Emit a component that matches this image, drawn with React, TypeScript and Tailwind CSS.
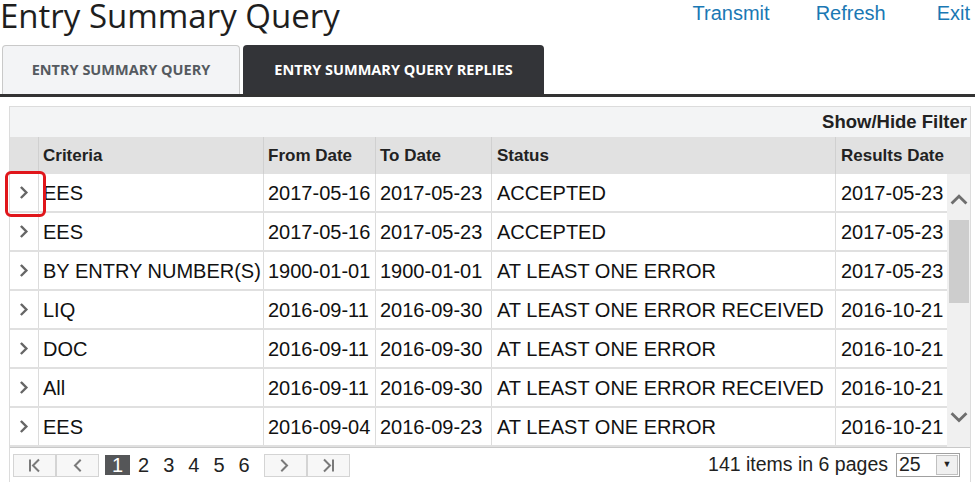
import React from 'react';

type Row = { criteria: string; from: string; to: string; status: string; results: string };

const rows: Row[] = [
  { criteria: 'EES', from: '2017-05-16', to: '2017-05-23', status: 'ACCEPTED', results: '2017-05-23' },
  { criteria: 'EES', from: '2017-05-16', to: '2017-05-23', status: 'ACCEPTED', results: '2017-05-23' },
  { criteria: 'BY ENTRY NUMBER(S)', from: '1900-01-01', to: '1900-01-01', status: 'AT LEAST ONE ERROR', results: '2017-05-23' },
  { criteria: 'LIQ', from: '2016-09-11', to: '2016-09-30', status: 'AT LEAST ONE ERROR RECEIVED', results: '2016-10-21' },
  { criteria: 'DOC', from: '2016-09-11', to: '2016-09-30', status: 'AT LEAST ONE ERROR', results: '2016-10-21' },
  { criteria: 'All', from: '2016-09-11', to: '2016-09-30', status: 'AT LEAST ONE ERROR RECEIVED', results: '2016-10-21' },
  { criteria: 'EES', from: '2016-09-04', to: '2016-09-23', status: 'AT LEAST ONE ERROR', results: '2016-10-21' },
];

const Chevron = ({ dir, className, width = 2.2 }: { dir: 'left' | 'right' | 'up' | 'down'; className?: string; width?: number }) => {
  const d = {
    right: 'M4 2 L9 7 L4 12',
    left: 'M9 2 L4 7 L9 12',
    up: 'M2 9 L7 4 L12 9',
    down: 'M2 4 L7 9 L12 4',
  }[dir];
  return (
    <svg viewBox="0 0 14 14" className={className} fill="none" stroke="currentColor" strokeWidth={width} strokeLinecap="square">
      <path d={d} />
    </svg>
  );
};

const PagerButton = ({ children }: { children: React.ReactNode }) => (
  <div className="w-[43px] h-[23px] border border-[#d4d4d4] bg-[#f7f7f7] flex items-center justify-center text-[#7a7a7a]">
    {children}
  </div>
);

export default function App() {
  return (
    <div className="w-[975px] h-[482px] bg-white overflow-hidden relative" style={{ fontFamily: '"Liberation Sans", Arial, sans-serif' }}>
      {/* title bar */}
      <div className="flex items-start h-[45px]">
        <h1 className="text-[33px] leading-[31px] text-[#1e1e1e]" style={{ fontFamily: '"Open Sans", sans-serif' }}>
          Entry Summary Query
        </h1>
        <div className="ml-auto flex pr-[5px] pt-[1px] text-[20px] leading-[24px] text-[#1a78b4]">
          <span>Transmit</span>
          <span className="ml-[46px]">Refresh</span>
          <span className="ml-[51px]">Exit</span>
        </div>
      </div>

      {/* tabs */}
      <div className="flex gap-[3px] pl-[2px] h-[52px] border-b-[3px] border-[#333333]" style={{ fontFamily: '"Open Sans", sans-serif' }}>
        <div className="w-[238px] h-full rounded-t-[4px] border border-b-0 border-[#c9c9c9] bg-[#f3f4f6] flex items-center justify-center text-[14.5px] font-bold text-[#555a60]">
          ENTRY SUMMARY QUERY
        </div>
        <div className="w-[301px] h-full rounded-t-[4px] bg-[#333438] flex items-center justify-center text-[14.5px] font-bold text-white">
          ENTRY SUMMARY QUERY REPLIES
        </div>
      </div>

      {/* grid */}
      <div className="ml-[9px] mt-[9px] w-[962px] border-l border-r border-t border-[#dcdcdc]">
        <div className="h-[30px] bg-[#f3f4f5] flex items-center justify-end pr-[3px] text-[18.5px] font-bold text-[#222]">
          Show/Hide Filter
        </div>
        <div className="flex h-[37px] bg-[#e1e1e1] text-[17px] font-bold text-[#222] items-center">
          <div className="w-[29px] h-full border-r border-[#d0d0d0]" />
          <div className="w-[225px] h-full border-r border-[#d0d0d0] flex items-center pl-[4px]">Criteria</div>
          <div className="w-[112px] h-full border-r border-[#d0d0d0] flex items-center pl-[4px]">From Date</div>
          <div className="w-[116px] h-full border-r border-[#d0d0d0] flex items-center pl-[4px]">To Date</div>
          <div className="w-[344px] h-full border-r border-[#d0d0d0] flex items-center pl-[5px]">Status</div>
          <div className="flex-1 h-full flex items-center pl-[5px]">Results Date</div>
        </div>
        <div className="flex">
          <div className="w-[937px] text-[20px] text-[#111]">
            {rows.map((r, i) => (
              <div key={i} className="flex h-[39px] border-b-2 border-[#e0e0e0]">
                <div className="w-[29px] border-r border-[#dcdcdc] flex items-center justify-center text-[#666666]">
                  <Chevron dir="right" className="w-[13px] h-[13px]" width={2.6} />
                </div>
                <div className="w-[225px] border-r border-[#dcdcdc] flex items-center pl-[4px]">{r.criteria}</div>
                <div className="w-[112px] border-r border-[#dcdcdc] flex items-center pl-[4px]">{r.from}</div>
                <div className="w-[116px] border-r border-[#dcdcdc] flex items-center pl-[4px]">{r.to}</div>
                <div className="w-[344px] border-r border-[#dcdcdc] flex items-center pl-[5px]">{r.status}</div>
                <div className="flex-1 flex items-center pl-[5px]">{r.results}</div>
              </div>
            ))}
          </div>
          {/* scrollbar */}
          <div className="flex-1 bg-[#f0f0f0] flex flex-col items-center text-[#6e6e6e]">
            <Chevron dir="up" className="w-[18px] h-[18px] mt-[17px]" />
            <div className="w-[20px] h-[83px] bg-[#cdcdcd] mt-[11px]" />
            <Chevron dir="down" className="w-[18px] h-[18px] mt-auto mb-[20px]" />
          </div>
        </div>
        {/* pager */}
        <div className="h-[35px] flex items-center pl-[3px] pr-[10px] border-t border-[#c8c8c8] bg-white">
          <div className="flex">
            <PagerButton>
              <svg viewBox="0 0 16 14" className="w-[16px] h-[15px]" fill="none" stroke="currentColor" strokeWidth="2">
                <path d="M3 1 V13 M12 1 L6 7 L12 13" />
              </svg>
            </PagerButton>
            <PagerButton>
              <Chevron dir="left" className="w-[14px] h-[15px]" width={2} />
            </PagerButton>
          </div>
          <div className="flex items-center text-[20px] text-[#222] ml-[6px]">
            <span className="w-[25px] h-[20px] bg-[#555658] text-white flex items-center justify-center leading-none">1</span>
            <span className="ml-[8px]">2</span>
            <span className="ml-[14px]">3</span>
            <span className="ml-[14px]">4</span>
            <span className="ml-[14px]">5</span>
            <span className="ml-[14px]">6</span>
          </div>
          <div className="flex ml-[14px]">
            <PagerButton>
              <Chevron dir="right" className="w-[14px] h-[15px]" width={2} />
            </PagerButton>
            <PagerButton>
              <svg viewBox="0 0 16 14" className="w-[16px] h-[15px]" fill="none" stroke="currentColor" strokeWidth="2">
                <path d="M4 1 L10 7 L4 13 M13 1 V13" />
              </svg>
            </PagerButton>
          </div>
          <div className="ml-auto flex items-center text-[19.5px] text-[#222]">
            <span>141 items in 6 pages</span>
            <div className="ml-[8px] w-[64px] h-[24px] border border-[#a0a0a0] flex items-center">
              <span className="pl-[2px] flex-1 leading-none">25</span>
              <div className="w-[22px] h-[20px] mr-[1px] border border-[#c0c0c0] bg-[#f0f0f0] flex items-center justify-center text-[9px] text-[#222]">▼</div>
            </div>
          </div>
        </div>
      </div>

      {/* annotation */}
      <div className="absolute left-[5px] top-[171px] w-[41px] h-[46px] border-[3px] border-[#e0161b] rounded-[6px] pointer-events-none" />
    </div>
  );
}
